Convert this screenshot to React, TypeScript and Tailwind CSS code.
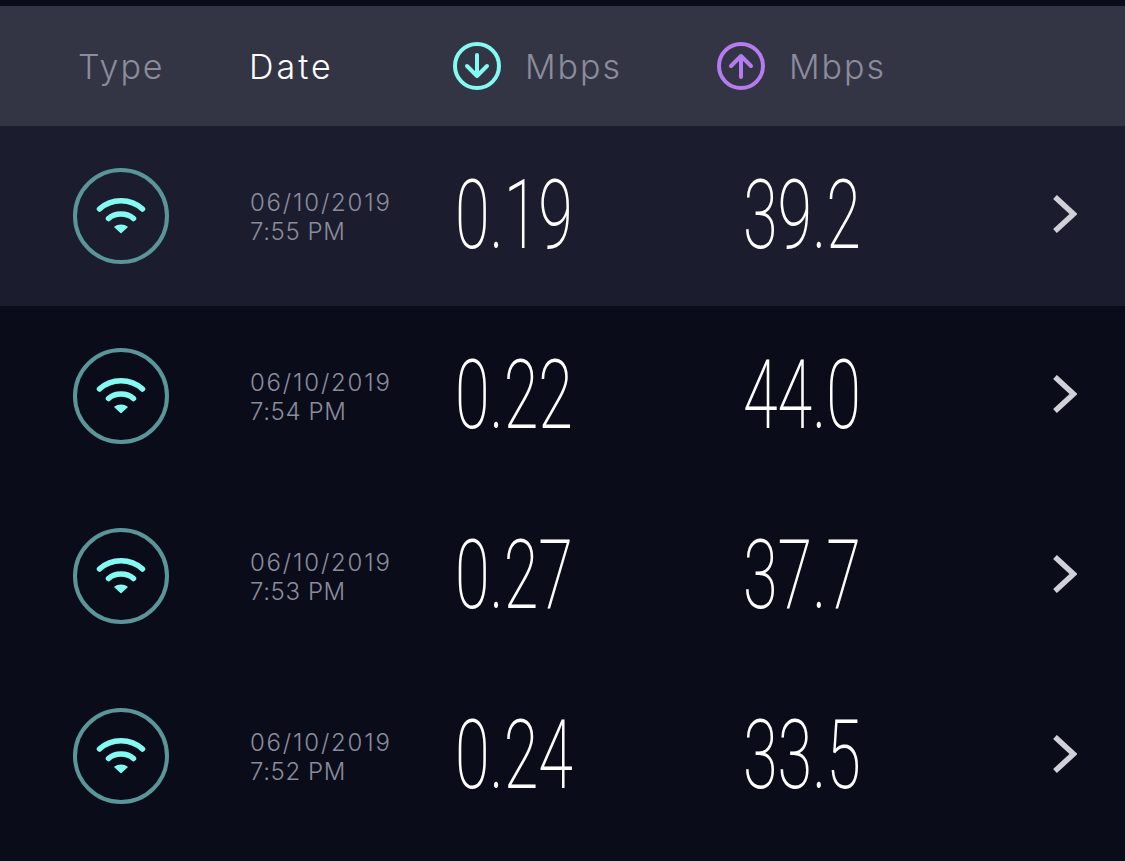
const rows = [
  { time: "7:55 PM", down: "0.19", up: "39.2" },
  { time: "7:54 PM", down: "0.22", up: "44.0" },
  { time: "7:53 PM", down: "0.27", up: "37.7" },
  { time: "7:52 PM", down: "0.24", up: "33.5" },
];

function Wifi() {
  return (
    <svg width="50" height="38" viewBox="0 0 50 38" fill="none">
      <path d="M3.5 12C15.5 1 34.5 1 46.5 12" stroke="#84fbf2" strokeWidth="5.5" strokeLinecap="round" />
      <path d="M12.5 21.5C19 15.5 31 15.5 37.5 21.5" stroke="#84fbf2" strokeWidth="5.5" strokeLinecap="round" />
      <path d="M19 30C22 27.5 28 27.5 31 30L25 35.5Z" fill="#84fbf2" stroke="#84fbf2" strokeWidth="1.5" strokeLinejoin="round" />
    </svg>
  );
}

function CircleArrow({ color, up }: { color: string; up?: boolean }) {
  return (
    <svg width="48" height="48" viewBox="0 0 48 48" fill="none">
      <circle cx="24" cy="24" r="22" stroke={color} strokeWidth="4" />
      {up ? (
        <path d="M24 35V14M14 24L24 14L34 24" stroke={color} strokeWidth="4" strokeLinecap="round" strokeLinejoin="round" />
      ) : (
        <path d="M24 13V34M14 24L24 34L34 24" stroke={color} strokeWidth="4" strokeLinecap="round" strokeLinejoin="round" />
      )}
    </svg>
  );
}

function Num({ value, w }: { value: string; w: string }) {
  return (
    <div className={`${w} shrink-0 flex items-center`}>
      <span className="inline-block origin-left scale-x-[0.655] font-['Roboto',sans-serif] font-extralight text-[96px] leading-none text-white whitespace-nowrap -mt-[2px]">
        {value}
      </span>
    </div>
  );
}

export default function App() {
  return (
    <div className="w-[1125px] h-[861px] overflow-hidden bg-[#0a0c1a] pt-[6px] font-['Inter',sans-serif]">
      <div className="h-[120px] bg-[#333544] flex items-center pl-[78px] text-[34px] font-light text-[#8b8c9c] tracking-[2px]">
        <span className="w-[171px] shrink-0">Type</span>
        <span className="w-[204px] shrink-0 text-white tracking-[3px]">Date</span>
        <div className="w-[264px] shrink-0 flex items-center gap-[24px]">
          <CircleArrow color="#84fbf2" />
          <span>Mbps</span>
        </div>
        <div className="flex items-center gap-[24px]">
          <CircleArrow color="#b57bf0" up />
          <span>Mbps</span>
        </div>
      </div>
      {rows.map((r, i) => (
        <div key={r.time} className={`h-[180px] flex items-center pl-[73px] ${i === 0 ? "bg-[#1b1d2e]" : ""}`}>
          <div className="w-[177px] shrink-0">
            <div className="w-[96px] h-[96px] rounded-full border-4 border-[#5a9698] flex items-center justify-center">
              <Wifi />
            </div>
          </div>
          <div className="w-[205px] shrink-0 pt-[2px] text-[24px] leading-[29px] font-light text-[#8b8c9c]">
            <div className="tracking-[1.8px]">06/10/2019</div>
            <div className="tracking-[0.6px]">{r.time}</div>
          </div>
          <Num value={r.down} w="w-[288px]" />
          <Num value={r.up} w="w-[308px]" />
          <svg width="24" height="38" viewBox="0 0 24 38" fill="none" className="-mt-[4px] ml-[2px]">
            <path d="M2 2L20.5 19L2 36" stroke="#d0d1d8" strokeWidth="5.5" strokeLinejoin="miter" />
          </svg>
        </div>
      ))}
    </div>
  );
}
